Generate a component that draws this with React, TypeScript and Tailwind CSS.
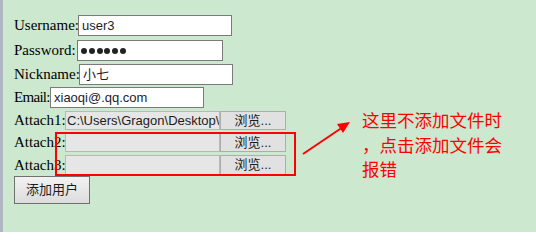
const serif = "font-['Liberation_Serif',serif]"
const sans = "font-['Liberation_Sans','Noto_Sans_CJK_SC',sans-serif]"

const TextBox = ({ width, children }: { width: string; children?: React.ReactNode }) => (
    <div className={`${width} h-full border border-[#7a7a7a] bg-white flex items-center pl-[3px] text-[13px] text-[#1c1c2c] overflow-hidden whitespace-nowrap ${sans}`}>
        {children}
    </div>
)

const FileBox = ({ value }: { value?: string }) => (
    <div className="flex h-full">
        <div className={`w-[155px] h-full border border-[#b8b8b8] bg-[#e6e6e6] flex items-center pl-[1px] text-[13px] text-[#1c1c1c] overflow-hidden whitespace-nowrap ${sans}`}>
            {value}
        </div>
        <div className={`w-[66px] h-full border border-[#adadad] bg-[#e1e1e1] flex items-center justify-center text-[13px] text-[#1c1c1c] ${sans}`}>
            浏览...
        </div>
    </div>
)

const Row = ({ label, labelWidth, className, children }: { label: string; labelWidth: string; className: string; children: React.ReactNode }) => (
    <div className={`flex items-center ${className}`}>
        <span className={`${labelWidth} whitespace-nowrap text-[15px] text-black ${serif}`}>{label}</span>
        {children}
    </div>
)

export default function App() {
    return (
        <div className="relative flex w-[536px] h-[232px] bg-[#cce8cf] border-l-[3px] border-[#b1b7c2] pl-[11px]">
            <div className="flex flex-col w-[290px]">
                <Row label="Username:" labelWidth="w-[64px]" className="h-[21px] mt-[15px]">
                    <TextBox width="w-[154px]">user3</TextBox>
                </Row>
                <Row label="Password:" labelWidth="w-[63px]" className="h-[21px] mt-[4px]">
                    <TextBox width="w-[146px]">
                        <div className="flex gap-[1.8px]">
                            {[0, 1, 2, 3, 4, 5].map((i) => (
                                <span key={i} className="w-[6px] h-[6px] rounded-full bg-[#222]"></span>
                            ))}
                        </div>
                    </TextBox>
                </Row>
                <Row label="Nickname:" labelWidth="w-[65px]" className="h-[21px] mt-[3px]">
                    <TextBox width="w-[154px]">小七</TextBox>
                </Row>
                <Row label="Email:" labelWidth="w-[36px] tracking-[-0.7px]" className="h-[21px] mt-[2px]">
                    <TextBox width="w-[154px]">xiaoqi@.qq.com</TextBox>
                </Row>
                <Row label="Attach1:" labelWidth="w-[51px]" className="h-[19px] mt-[3px]">
                    <FileBox value="C:\Users\Gragon\Desktop\" />
                </Row>
                <Row label="Attach2:" labelWidth="w-[51px]" className="h-[19px] mt-[3px]">
                    <FileBox />
                </Row>
                <Row label="Attach3:" labelWidth="w-[51px]" className="h-[20px] mt-[3px]">
                    <FileBox />
                </Row>
                <button className={`mt-[1px] w-[76px] h-[28px] border border-[#707070] bg-gradient-to-b from-[#f2f2f2] to-[#dcdcdc] text-[13px] text-[#1c1c1c] ${sans}`}>
                    添加用户
                </button>
            </div>

            <div className="ml-[58px] pt-[108px] text-[17.5px] leading-[24.5px] text-[#ff0000] font-['Noto_Sans_CJK_SC',sans-serif]">
                <div>这里不添加文件时</div>
                <div>，点击添加文件会</div>
                <div>报错</div>
            </div>

            {/* annotation: red box + arrow */}
            <div className="absolute left-[52px] top-[132px] w-[241px] h-[44px] border-2 border-[#ff0000]"></div>
            <svg className="absolute left-[292px] top-[112px]" width="64" height="50" viewBox="0 0 64 50">
                <line x1="8" y1="42" x2="48" y2="15" stroke="#ff0000" strokeWidth="2" />
                <polygon points="55,10 42,12 48,21" fill="#ff0000" />
            </svg>
        </div>
    )
}
